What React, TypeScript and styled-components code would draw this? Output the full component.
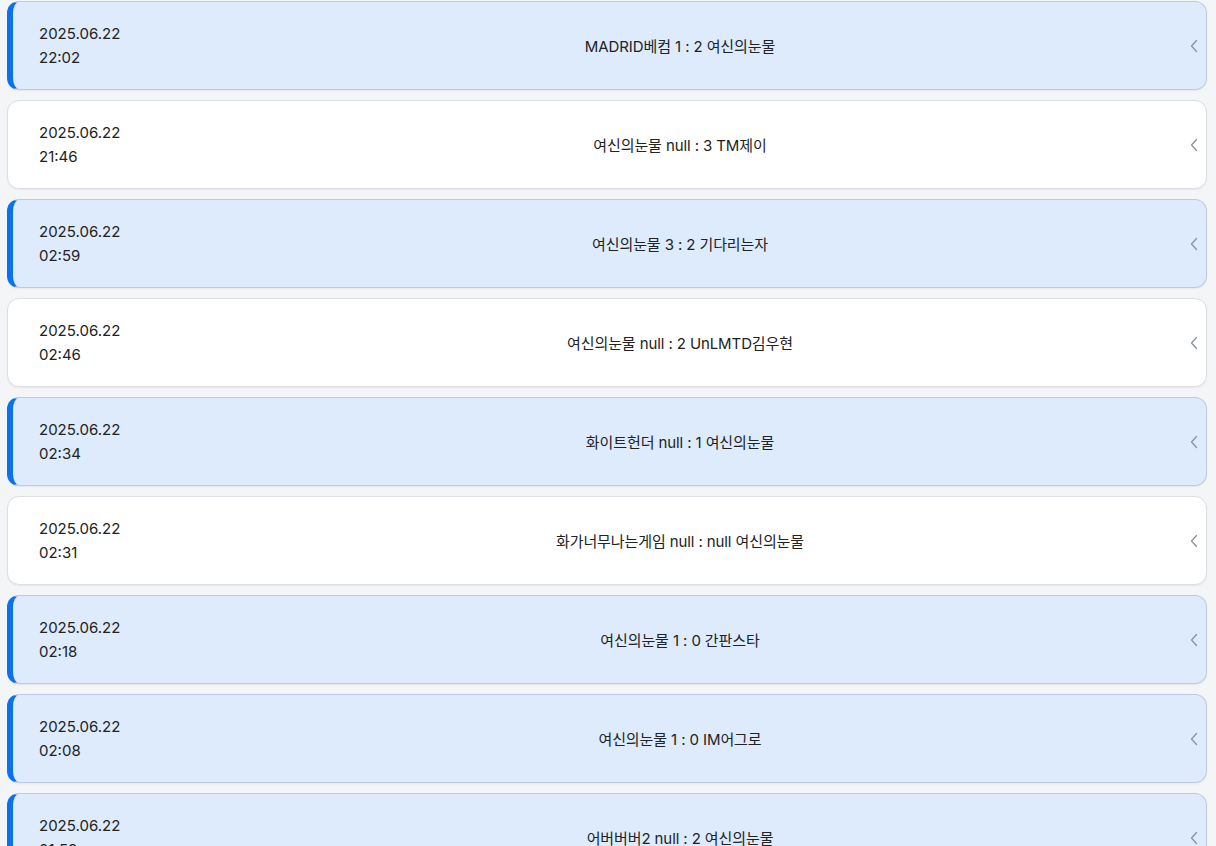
import React from "react";
import styled, { createGlobalStyle } from "styled-components";

const Global = createGlobalStyle`
  html, body { margin: 0; padding: 0; background: #f4f5f6; }
  body { font-family: Inter, "Noto Sans CJK KR", sans-serif; color: #222; }
`;

const List = styled.div`
  display: flex;
  flex-direction: column;
  gap: 10px;
  padding: 1px 9px 0 7px;
`;

const Card = styled.div<{ $mine: boolean }>`
  display: flex;
  align-items: center;
  height: 89px;
  box-sizing: border-box;
  border-radius: 12px;
  background: ${(p) => (p.$mine ? "#ddebfd" : "#ffffff")};
  border: 1px solid ${(p) => (p.$mine ? "#bccbe0" : "#dcdfe3")};
  border-left: ${(p) => (p.$mine ? "6px solid #0a72ef" : "1px solid #dcdfe3")};
  padding: 0 5px 0 ${(p) => (p.$mine ? "26px" : "31px")};
  box-shadow: 0 1px 2px rgba(0, 0, 0, 0.06);
`;

const DateCol = styled.div`
  width: 134px;
  flex: none;
  display: flex;
  flex-direction: column;
  font-size: 15px;
  line-height: 24px;
  color: #222;
`;

const Match = styled.div`
  flex: 1;
  text-align: center;
  font-size: 15px;
  color: #222;
  letter-spacing: -0.1px;
`;

const Chevron = styled.div`
  flex: none;
  width: 14px;
  display: flex;
  align-items: center;
  justify-content: center;
  color: #8a929c;
`;

const rows = [
  { d: "2025.06.22", t: "22:02", m: "MADRID베컴 1 : 2 여신의눈물", mine: true },
  { d: "2025.06.22", t: "21:46", m: "여신의눈물 null : 3 TM제이", mine: false },
  { d: "2025.06.22", t: "02:59", m: "여신의눈물 3 : 2 기다리는자", mine: true },
  { d: "2025.06.22", t: "02:46", m: "여신의눈물 null : 2 UnLMTD김우현", mine: false },
  { d: "2025.06.22", t: "02:34", m: "화이트헌더 null : 1 여신의눈물", mine: true },
  { d: "2025.06.22", t: "02:31", m: "화가너무나는게임 null : null 여신의눈물", mine: false },
  { d: "2025.06.22", t: "02:18", m: "여신의눈물 1 : 0 간판스타", mine: true },
  { d: "2025.06.22", t: "02:08", m: "여신의눈물 1 : 0 IM어그로", mine: true },
  { d: "2025.06.22", t: "01:53", m: "어버버버2 null : 2 여신의눈물", mine: true },
];

const ChevronIcon = () => (
  <svg width="10" height="16" viewBox="0 0 10 16" fill="none">
    <path d="M7.5 2.5 L2.5 8 L7.5 13.5" stroke="currentColor" strokeWidth="1.3" strokeLinecap="round" strokeLinejoin="round" />
  </svg>
);

export default function App() {
  return (
    <>
      <Global />
      <List>
        {rows.map((r, i) => (
          <Card key={i} $mine={r.mine}>
            <DateCol>
              <span>{r.d}</span>
              <span>{r.t}</span>
            </DateCol>
            <Match>{r.m}</Match>
            <Chevron>
              <ChevronIcon />
            </Chevron>
          </Card>
        ))}
      </List>
    </>
  );
}
